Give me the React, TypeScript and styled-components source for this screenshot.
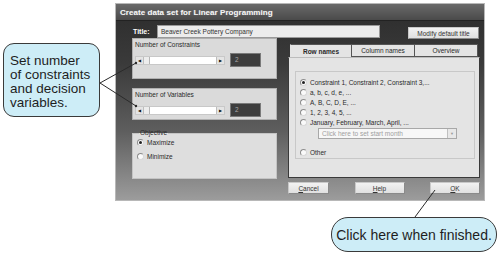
import React from 'react'
import styled, { createGlobalStyle } from 'styled-components'

const GlobalStyle = createGlobalStyle`
  html, body {
    margin: 0;
    padding: 0;
    background: #ffffff;
  }
  * {
    box-sizing: border-box;
  }
`

const Canvas = styled.div`
  position: relative;
  width: 500px;
  height: 254px;
  overflow: hidden;
  background: #ffffff;
  padding: 3px 0 0 115px;
  font-family: "Liberation Sans", Arial, sans-serif;
`

const Dialog = styled.div`
  width: 370px;
  height: 198px;
  display: flex;
  flex-direction: column;
  border: 1px solid #b8b8b8;
  background: linear-gradient(to bottom, #2c2c2c 0%, #3a3a3a 30%, #5e5e5e 65%, #9c9c9c 100%);
`

const TitleBar = styled.div`
  height: 17px;
  flex: none;
  display: flex;
  align-items: center;
  padding-left: 4px;
  background: linear-gradient(to bottom, #6a6a6a, #4a4a4a);
  border-bottom: 1px solid #222;
  color: #f4f4f4;
  font-size: 8px;
  font-weight: bold;
  letter-spacing: 0.05px;
  text-shadow: 0 0 1px rgba(255, 255, 255, 0.3);
`

const Body = styled.div`
  flex: 1;
  display: flex;
  flex-direction: column;
  padding: 3px 4px 0 16px;
`

const TitleRow = styled.div`
  display: flex;
  align-items: center;
  height: 14px;
`

const TitleLabel = styled.span`
  width: 25px;
  padding-left: 1px;
  color: #ffffff;
  font-size: 7px;
  font-weight: bold;
`

const TitleInput = styled.div`
  width: 223px;
  height: 13px;
  background: #ececec;
  border: 1px solid #9a9a9a;
  color: #333;
  font-size: 6.5px;
  line-height: 11px;
  padding-left: 3px;
`

const Button = styled.div<{ $w: number }>`
  width: ${p => p.$w}px;
  height: 12px;
  display: flex;
  align-items: center;
  justify-content: center;
  background: linear-gradient(to bottom, #f2f2f2, #e0e0e0);
  border: 1px solid #c8c8c8;
  border-right-color: #8a8a8a;
  border-bottom-color: #8a8a8a;
  color: #333;
  font-size: 6.5px;
  u {
    text-decoration: underline;
  }
`

const ModifyButton = styled(Button)`
  margin-left: 28px;
  margin-top: 4px;
`

const Main = styled.div`
  display: grid;
  grid-template-columns: 145px 192px;
  column-gap: 11px;
`

const LeftColumn = styled.div`
  display: flex;
  flex-direction: column;
`

const SliderPanel = styled.div<{ $top: number; $h: number }>`
  margin-top: ${p => p.$top}px;
  height: ${p => p.$h}px;
  background: #dadada;
  border: 1px solid #b0b0b0;
  padding: 2px 2px 0 2px;
  display: flex;
  flex-direction: column;
  gap: 4px;
`

const PanelLabel = styled.span`
  color: #2a2a2a;
  font-size: 6.5px;
  line-height: 8px;
`

const SliderRow = styled.div`
  display: flex;
  align-items: center;
  gap: 5px;
`

const ScrollBar = styled.div`
  width: 90px;
  height: 9px;
  display: flex;
  background: #ffffff;
  border: 1px solid #c8c8c8;
`

const ScrollArrow = styled.div`
  width: 8px;
  height: 100%;
  display: flex;
  align-items: center;
  justify-content: center;
  background: #e4e4e4;
  border-right: 1px solid #bdbdbd;
  color: #111;
  font-size: 4px;
  &:last-child {
    border-right: none;
    border-left: 1px solid #bdbdbd;
  }
`

const Thumb = styled.div`
  width: 6px;
  height: 100%;
  background: #ededed;
  border-right: 1px solid #b6b6b6;
`

const Track = styled.div`
  flex: 1;
`

const NumberBox = styled.div`
  width: 31px;
  height: 14px;
  background: #3e3e3e;
  border: 1px solid #7a7a7a;
  color: #a8a8a8;
  font-size: 6.5px;
  line-height: 12px;
  padding-left: 4px;
`

const GroupBox = styled.fieldset`
  margin: 9px 0 0 0;
  height: 50px;
  padding: 0 4px;
  background: #dedede;
  border: 1px solid #c4c4c4;
  display: flex;
  flex-direction: column;
  gap: 4px;
  legend {
    padding: 0 1px;
    margin-left: 2px;
    color: #2a2a2a;
    font-size: 6.5px;
    line-height: 8px;
  }
`

const RadioRow = styled.div<{ $h?: number; $gapTop?: number }>`
  display: flex;
  align-items: center;
  gap: 3px;
  height: ${p => p.$h ?? 10}px;
  margin-top: ${p => p.$gapTop ?? 0}px;
  color: #2a2a2a;
  font-size: 6.5px;
  white-space: nowrap;
`

const Radio = styled.span<{ $on?: boolean }>`
  width: 7px;
  height: 7px;
  flex: none;
  border-radius: 50%;
  background: #fafafa;
  border: 1px solid #8c8c8c;
  border-right-color: #d8d8d8;
  border-bottom-color: #d8d8d8;
  display: flex;
  align-items: center;
  justify-content: center;
  &::after {
    content: '';
    width: 3px;
    height: 3px;
    border-radius: 50%;
    background: ${p => (p.$on ? '#222' : 'transparent')};
  }
`

const RightColumn = styled.div`
  display: flex;
  flex-direction: column;
  padding-top: 6px;
`

const TabStrip = styled.div`
  display: flex;
  height: 13px;
  padding-left: 2px;
`

const Tab = styled.div<{ $w: number; $active?: boolean }>`
  width: ${p => p.$w}px;
  height: 100%;
  display: flex;
  align-items: center;
  justify-content: center;
  background: #e4e4e4;
  border: 1px solid #555;
  border-bottom: ${p => (p.$active ? 'none' : '1px solid #555')};
  border-left: ${p => (p.$active ? '1px solid #e4e4e4' : 'none')};
  color: #2a2a2a;
  font-size: 6.5px;
  font-weight: ${p => (p.$active ? 'bold' : 'normal')};
  position: relative;
  z-index: ${p => (p.$active ? 1 : 0)};
`

const TabPanel = styled.div`
  height: 121px;
  background: #e4e4e4;
  border: 1px solid #3a3a3a;
  border-top: 1px solid #bcbcbc;
  padding: 13px 4px 0 6px;
`

const InnerGroup = styled.div`
  height: 88px;
  border: 1px solid #c8c8c8;
  padding: 5px 0 0 4px;
  display: flex;
  flex-direction: column;
`

const Select = styled.div`
  width: 139px;
  height: 11px;
  margin: 1px 0 0 18px;
  display: flex;
  background: #f7f7f7;
  border: 1px solid #a8a8a8;
  color: #a0a0a0;
  font-size: 6.5px;
  line-height: 9px;
  span {
    flex: 1;
    padding-left: 3px;
  }
`

const SelectArrow = styled.div`
  width: 9px;
  background: #e8e8e8;
  border-left: 1px solid #c0c0c0;
  color: #999;
  font-size: 4px;
  display: flex;
  align-items: center;
  justify-content: center;
`

const ButtonRow = styled.div`
  display: flex;
  justify-content: space-between;
  margin-top: 4px;
`

const Callout = styled.div<{ $left: number; $top: number; $w: number; $h: number; $r: number }>`
  position: absolute;
  left: ${p => p.$left}px;
  top: ${p => p.$top}px;
  width: ${p => p.$w}px;
  height: ${p => p.$h}px;
  border-radius: ${p => p.$r}px;
  border: 1px solid #3a3a3a;
  background: #cdedf7;
  color: #1e1e1e;
  font-family: "Liberation Sans", Arial, sans-serif;
  font-size: 13.5px;
  line-height: 14px;
  display: flex;
  align-items: center;
`

const LeftCalloutText = styled.div`
  padding-left: 6px;
  padding-top: 3px;
`

const BottomCalloutText = styled.div`
  width: 100%;
  text-align: center;
  font-size: 14px;
`

const Leaders = styled.svg`
  position: absolute;
  left: 0;
  top: 0;
  pointer-events: none;
`

const rowNames = [
  'Constraint 1, Constraint 2, Constraint 3,...',
  'a, b, c, d, e, ...',
  'A, B, C, D, E, ...',
  '1, 2, 3, 4, 5, ...',
  'January, February, March, April, ...',
]

function Slider({ label, top, h }: { label: string; top: number; h: number }) {
  return (
    <SliderPanel $top={top} $h={h}>
      <PanelLabel>{label}</PanelLabel>
      <SliderRow>
        <ScrollBar>
          <ScrollArrow>◀</ScrollArrow>
          <Thumb />
          <Track />
          <ScrollArrow>▶</ScrollArrow>
        </ScrollBar>
        <NumberBox>2</NumberBox>
      </SliderRow>
    </SliderPanel>
  )
}

export default function App() {
  return (
    <Canvas>
      <GlobalStyle />
      <Dialog>
        <TitleBar>Create data set for Linear Programming</TitleBar>
        <Body>
          <TitleRow>
            <TitleLabel>Title:</TitleLabel>
            <TitleInput>Beaver Creek Pottery Company</TitleInput>
            <ModifyButton $w={71}>Modify default title</ModifyButton>
          </TitleRow>
          <Main>
            <LeftColumn>
              <Slider label="Number of Constraints" top={0} h={41} />
              <Slider label="Number of Variables" top={9} h={32} />
              <GroupBox>
                <legend>Objective</legend>
                <RadioRow $h={10}>
                  <Radio $on />
                  Maximize
                </RadioRow>
                <RadioRow $h={10}>
                  <Radio />
                  Minimize
                </RadioRow>
              </GroupBox>
            </LeftColumn>
            <RightColumn>
              <TabStrip>
                <Tab $w={62} $active>Row names</Tab>
                <Tab $w={63}>Column names</Tab>
                <Tab $w={63}>Overview</Tab>
              </TabStrip>
              <TabPanel>
                <InnerGroup>
                  {rowNames.map((n, i) => (
                    <RadioRow key={n} $h={10.3}>
                      <Radio $on={i === 0} />
                      {n}
                    </RadioRow>
                  ))}
                  <Select>
                    <span>Click here to set start month</span>
                    <SelectArrow>▼</SelectArrow>
                  </Select>
                  <RadioRow $h={12} $gapTop={7}>
                    <Radio />
                    Other
                  </RadioRow>
                </InnerGroup>
              </TabPanel>
              <ButtonRow>
                <Button $w={41}><span><u>C</u>ancel</span></Button>
                <Button $w={50}><span><u>H</u>elp</span></Button>
                <Button $w={50}><span><u>O</u>K</span></Button>
              </ButtonRow>
            </RightColumn>
          </Main>
        </Body>
      </Dialog>

      <Leaders width={500} height={254}>
        <g stroke="#2a2a2a" strokeWidth={1} fill="none">
          <line x1={100} y1={83} x2={136} y2={63} />
          <line x1={100} y1={83} x2={136} y2={106} />
          <line x1={415} y1={217} x2={435} y2={190} />
        </g>
        <circle cx={136} cy={63} r={1.2} fill="#2a2a2a" />
        <circle cx={136} cy={106} r={1.2} fill="#2a2a2a" />
      </Leaders>

      <Callout $left={3} $top={43} $w={97} $h={74} $r={11}>
        <LeftCalloutText>
          Set number
          <br />
          of constraints
          <br />
          and decision
          <br />
          variables.
        </LeftCalloutText>
      </Callout>
      <Callout $left={331} $top={217} $w={166} $h={35} $r={17}>
        <BottomCalloutText>Click here when finished.</BottomCalloutText>
      </Callout>
    </Canvas>
  )
}
